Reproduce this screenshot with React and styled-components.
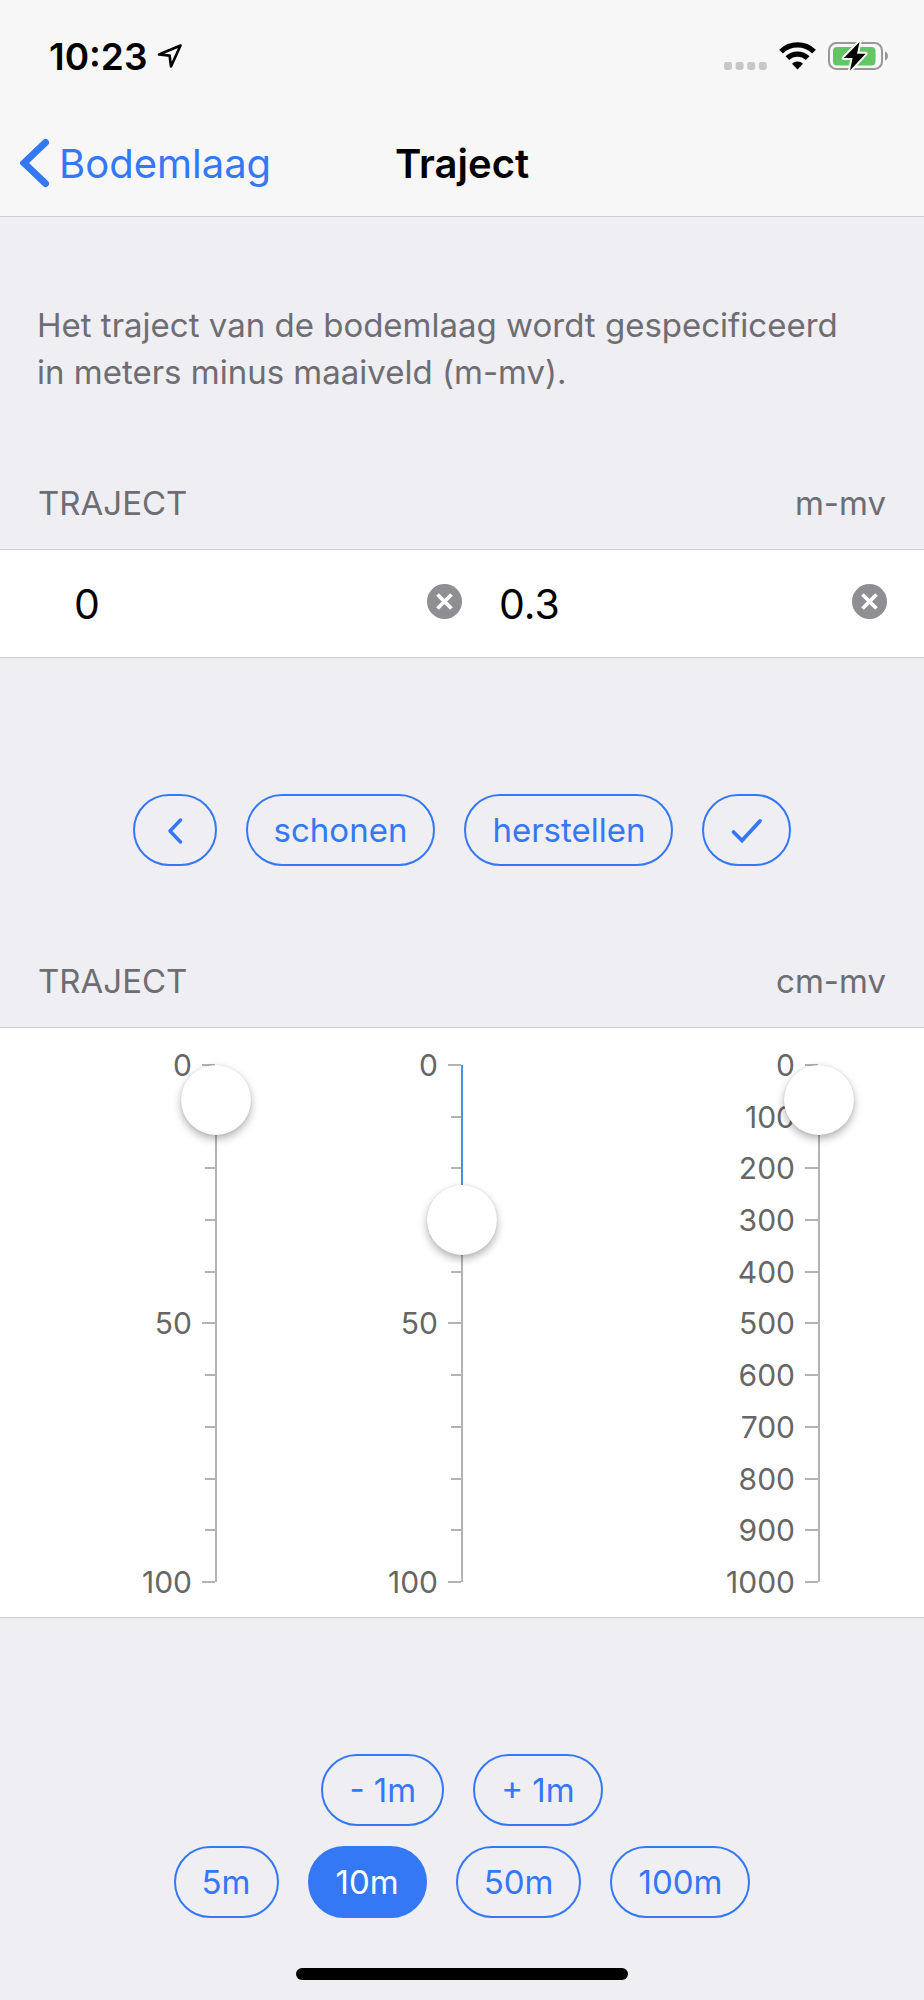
import React, { useState } from 'react';
import styled, { createGlobalStyle, css } from 'styled-components';

const blue = '#3478f6';
const grey = '#6d6d72';
const line = '#cfcfd2';

const GlobalStyle = createGlobalStyle`
    * {
        box-sizing: border-box;
    }

    body {
        margin: 0;
        background: #eeeef3;
        font-family: Inter, "Liberation Sans", sans-serif;
        font-size: 33px;
        color: #000;
    }

    button, input {
        font: inherit;
        color: inherit;
        margin: 0;
    }
`;

const Screen = styled.div`
    min-height: 100vh;
    display: flex;
    flex-direction: column;
`;

const Header = styled.header`
    background: #f7f7f7;
    border-bottom: 1px solid ${line};
`;

const StatusBar = styled.div`
    display: flex;
    align-items: center;
    height: 112px;
    padding: 0 34px 0 49px;
`;

const Time = styled.span`
    font-size: 37px;
    font-weight: 600;
    margin-right: 10px;
`;

const StatusIcons = styled.div`
    display: flex;
    align-items: center;
    gap: 12px;
    margin-left: auto;
`;

const NavBar = styled.nav`
    display: grid;
    grid-template-columns: 1fr auto 1fr;
    align-items: center;
    height: 104px;
    padding: 0 20px 2px;
`;

const BackLink = styled.a`
    display: flex;
    align-items: center;
    gap: 9px;
    font-size: 40px;
    color: ${blue};
    text-decoration: none;
`;

const Title = styled.h1`
    margin: 0;
    font-size: 40px;
    font-weight: 600;
`;

const Intro = styled.p`
    margin: 0;
    padding: 85px 60px 0 37px;
    line-height: 47px;
    color: ${grey};
`;

const SectionHeader = styled.div`
    display: flex;
    justify-content: space-between;
    padding: ${props => props.$top}px 38px 26px;
    line-height: 40px;
    color: ${grey};
`;

const SectionTitle = styled.h2`
    margin: 0;
    font-size: inherit;
    font-weight: 400;
    text-transform: uppercase;
`;

const Panel = styled.section`
    background: #fff;
    border: solid ${line};
    border-width: 1px 0;
`;

const Fields = styled(Panel)`
    display: grid;
    grid-template-columns: repeat(2, minmax(0, 1fr));
    height: 109px;
`;

const Field = styled.div`
    display: flex;
    align-items: center;
    padding: ${props => (props.$indent ? '0 0 0 74px' : '0 37px')};
`;

const TextInput = styled.input`
    flex: 1;
    min-width: 0;
    padding: 0;
    border: 0;
    outline: 0;
    background: none;
    font-size: 41px;
`;

const ClearButton = styled.button`
    display: flex;
    padding: 0 0 4px;
    border: 0;
    background: none;
    cursor: pointer;
`;

const Actions = styled.div`
    display: flex;
    flex-direction: column;
    gap: 20px;
    padding-top: 136px;
`;

const ButtonRow = styled.div`
    display: flex;
    justify-content: center;
    gap: 29px;
`;

const Pill = styled.button`
    display: flex;
    align-items: center;
    justify-content: center;
    height: 72px;
    padding: 0 26px;
    border: 2px solid ${blue};
    border-radius: 36px;
    background: none;
    color: ${blue};
    cursor: pointer;

    ${props => props.$active && css`
        background: ${blue};
        color: #fff;
    `}
`;

const Sliders = styled(Panel)`
    display: grid;
    grid-template-columns: 217fr 246fr 357fr 104fr;
    padding: 19px 0 17px;
`;

const SliderWrapper = styled.div`
    display: flex;
    align-items: center;
    justify-content: flex-end;
`;

const Scale = styled.div`
    display: flex;
    flex-direction: column;
    justify-content: space-between;
    height: 553px;
`;

const Mark = styled.div`
    display: flex;
    align-items: center;
    justify-content: flex-end;
    gap: 10px;
    height: 36px;
    line-height: 36px;
    font-size: 30px;
    color: #666;

    &:after {
        content: "";
        width: ${props => (props.$major ? 13 : 10)}px;
        height: 2px;
        background: #b3b3b3;
    }
`;

const Track = styled.div`
    position: relative;
    width: 2px;
    height: 517px;
    background: #b3b3b3;
`;

const Fill = styled.div`
    background: #4a90e2;
`;

const Thumb = styled.div`
    position: absolute;
    left: -34px;
    width: 70px;
    height: 70px;
    border-radius: 50%;
    background: #fff;
    box-shadow: 0 4px 9px rgba(0, 0, 0, 0.3), 0 0 2px rgba(0, 0, 0, 0.12);
`;

const RangeInput = styled.input`
    position: absolute;
    top: 0;
    left: -34px;
    width: 70px;
    height: 100%;
    writing-mode: vertical-lr;
    opacity: 0;
    cursor: pointer;
`;

const HomeBar = styled.div`
    width: 36%;
    height: 12px;
    margin: 50px auto 20px;
    border-radius: 6px;
    background: #000;
`;

const LocationIcon = () => (
    <svg width="26" height="26" viewBox="0 0 26 26" fill="none">
        <path d="M23.5 2.5L2 11.5L12.6 12.6L14 23.5Z" stroke="#000" strokeWidth="2.6" strokeLinejoin="round" />
    </svg>
);

const SignalIcon = () => (
    <svg width="43" height="28" viewBox="0 0 43 28" fill="#c7c7c9">
        <rect x="0" y="20" width="8" height="8" rx="2.4" />
        <rect x="11.6" y="20" width="8" height="8" rx="2.4" />
        <rect x="23.2" y="20" width="8" height="8" rx="2.4" />
        <rect x="34.8" y="20" width="8" height="8" rx="2.4" />
    </svg>
);

const WifiIcon = () => (
    <svg width="37" height="28" viewBox="0 0 37 28" fill="none">
        <path d="M2 9.6A23.6 23.6 0 0 1 35 9.6" stroke="#000" strokeWidth="5.4" />
        <path d="M8.3 16.2A14.6 14.6 0 0 1 28.7 16.2" stroke="#000" strokeWidth="5.2" />
        <path d="M18.5 27.4L13 21.8A8 8 0 0 1 24 21.8Z" fill="#000" />
    </svg>
);

const BatteryIcon = () => (
    <svg width="62" height="30" viewBox="0 0 62 30" fill="none">
        <rect x="1" y="2" width="53" height="26" rx="7.5" stroke="#98989a" strokeWidth="2" />
        <path d="M57 10.5C61 11.5 61 18.5 57 19.5Z" fill="#98989a" />
        <rect x="5" y="6" width="42.5" height="18.5" rx="4" fill="#63c564" />
        <path d="M31.5 1L15.8 17H24.6L22 29.5L37.6 12.7H29Z" fill="#000" stroke="#f7f7f7" strokeWidth="4" paintOrder="stroke" strokeLinejoin="round" />
    </svg>
);

const BackIcon = () => (
    <svg width="30" height="50" viewBox="0 0 30 50" fill="none">
        <path d="M25.5 4.500L4 25L25.5 45.500" stroke={blue} strokeWidth="7" strokeLinecap="round" />
    </svg>
);

const ClearIcon = () => (
    <svg width="35" height="35" viewBox="0 0 35 35" fill="none">
        <circle cx="17.5" cy="17.5" r="17.5" fill="#8e8e93" />
        <path d="M10.5 10.5L24.5 24.5M24.5 10.5L10.5 24.5" stroke="#fff" strokeWidth="3.800" />
    </svg>
);

const PreviousIcon = () => (
    <svg width="28" height="28" viewBox="0 0 28 28" fill="none">
        <path d="M19.5 4L9 15L19.5 26" stroke={blue} strokeWidth="3.400" strokeLinecap="round" strokeLinejoin="round" />
    </svg>
);

const CheckIcon = () => (
    <svg width="33" height="28" viewBox="0 0 33 28" fill="none">
        <path d="M3.5 16L12 24.500L30 5" stroke={blue} strokeWidth="3.800" strokeLinecap="round" />
    </svg>
);

const thumbTop = percent => `clamp(0px, calc(${percent}% - 35px), calc(100% - 70px))`;

const Slider = ({ label, max, labelEvery, initial }) => {
    const [value, setValue] = useState(initial);
    const percent = value / max * 100;
    const marks = Array.from({ length: 11 }, (_, i) => max / 10 * i);
    return (
        <SliderWrapper>
            <Scale>
                {marks.map(mark => {
                    const major = mark % labelEvery === 0;
                    return <Mark key={mark} $major={major}>{major && mark}</Mark>;
                })}
            </Scale>
            <Track>
                <Fill style={{ height: `${percent}%` }} />
                <Thumb style={{ top: thumbTop(percent) }} />
                <RangeInput
                    type="range"
                    aria-label={label}
                    min="0"
                    max={max}
                    value={value}
                    onChange={e => setValue(Number(e.target.value))}
                />
            </Track>
        </SliderWrapper>
    );
};

const DepthField = ({ label, indent, initial }) => {
    const [value, setValue] = useState(initial);
    return (
        <Field $indent={indent}>
            <TextInput
                type="text"
                inputMode="decimal"
                aria-label={label}
                value={value}
                onChange={e => setValue(e.target.value)}
            />
            <ClearButton type="button" aria-label={`${label} wissen`} onClick={() => setValue('')}>
                <ClearIcon />
            </ClearButton>
        </Field>
    );
};

const ranges = [5, 10, 50, 100];

const App = () => {
    const [range, setRange] = useState(10);
    return (
        <Screen>
            <GlobalStyle />
            <Header>
                <StatusBar>
                    <Time>10:23</Time>
                    <LocationIcon />
                    <StatusIcons>
                        <SignalIcon />
                        <WifiIcon />
                        <BatteryIcon />
                    </StatusIcons>
                </StatusBar>
                <NavBar>
                    <BackLink href="#bodemlaag">
                        <BackIcon />
                        Bodemlaag
                    </BackLink>
                    <Title>Traject</Title>
                </NavBar>
            </Header>
            <Intro>
                Het traject van de bodemlaag wordt gespecificeerd in meters minus maaiveld (m-mv).
            </Intro>
            <SectionHeader $top={87}>
                <SectionTitle>Traject</SectionTitle>
                <span>m-mv</span>
            </SectionHeader>
            <Fields>
                <DepthField label="Bovenkant" indent initial="0" />
                <DepthField label="Onderkant" initial="0.3" />
            </Fields>
            <Actions>
                <ButtonRow>
                    <Pill type="button" aria-label="vorige"><PreviousIcon /></Pill>
                    <Pill type="button">schonen</Pill>
                    <Pill type="button">herstellen</Pill>
                    <Pill type="button" aria-label="gereed"><CheckIcon /></Pill>
                </ButtonRow>
            </Actions>
            <SectionHeader $top={95}>
                <SectionTitle>Traject</SectionTitle>
                <span>cm-mv</span>
            </SectionHeader>
            <Sliders>
                <Slider label="Bovenkant in cm" max={100} labelEvery={50} initial={0} />
                <Slider label="Onderkant in cm" max={100} labelEvery={50} initial={30} />
                <Slider label="Diepte in cm" max={1000} labelEvery={100} initial={0} />
            </Sliders>
            <Actions>
                <ButtonRow>
                    <Pill type="button">- 1m</Pill>
                    <Pill type="button">+ 1m</Pill>
                </ButtonRow>
                <ButtonRow>
                    {ranges.map(item => (
                        <Pill
                            key={item}
                            type="button"
                            $active={item === range}
                            onClick={() => setRange(item)}
                        >
                            {item}m
                        </Pill>
                    ))}
                </ButtonRow>
            </Actions>
            <HomeBar />
        </Screen>
    );
};

export default App;
